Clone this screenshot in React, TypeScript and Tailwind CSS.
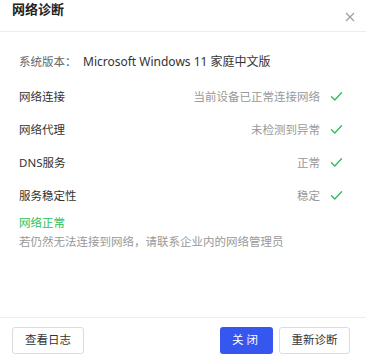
const checks = [
  { label: "网络连接", value: "当前设备已正常连接网络" },
  { label: "网络代理", value: "未检测到异常" },
  { label: "DNS服务", value: "正常" },
  { label: "服务稳定性", value: "稳定" },
];

function CheckMark() {
  return (
    <svg width="13" height="11" viewBox="0 0 13 11" fill="none" className="ml-[10px] shrink-0">
      <path d="M1.5 5.8 L4.8 9 L11.5 1.8" stroke="#2ec05c" strokeWidth="1.4" strokeLinecap="round" strokeLinejoin="round" />
    </svg>
  );
}

export default function App() {
  return (
    <div
      className="flex h-[362px] w-[366px] flex-col bg-white text-[#333]"
      style={{ fontFamily: '"Noto Sans", "Noto Sans CJK SC", sans-serif' }}
    >
      <div className="flex h-[32px] items-center justify-between border-b border-[#ececec] pl-3 pr-[11px]">
        <h1 className="-mt-[12px] text-[13px] font-bold text-[#222]">网络诊断</h1>
        <svg width="10" height="10" viewBox="0 0 10 10" className="mt-[3px]">
          <path d="M1 1 L9 9 M9 1 L1 9" stroke="#9a9aa2" strokeWidth="1.1" />
        </svg>
      </div>

      <div className="flex-1 pl-[19px] pr-[23px] pt-[20px] text-[11.5px]">
        <div className="flex h-[20px] items-center">
          <span className="w-[64px] text-[#666]">系统版本：</span>
          <span className="text-[12px] text-[#333]">Microsoft Windows 11 家庭中文版</span>
        </div>

        <div className="mt-[8px]">
          {checks.map((c) => (
            <div key={c.label} className="flex h-[33px] items-center">
              <span className="flex-1 text-[#333]">{c.label}</span>
              <span className="text-[#999]">{c.value}</span>
              <CheckMark />
            </div>
          ))}
        </div>

        <p className="mt-[2px] leading-[18px] text-[#2cbf57]">网络正常</p>
        <p className="leading-[20px] text-[#999]">若仍然无法连接到网络，请联系企业内的网络管理员</p>
      </div>

      <div className="flex h-[45px] items-center justify-between border-t border-[#eeeeee] pl-3 pr-4">
        <button className="h-[27px] w-[72px] rounded-[3px] border border-[#dcdcdc] text-[11.5px] text-[#333]">
          查看日志
        </button>
        <div className="flex gap-[6px]">
          <button className="h-[27px] w-[53px] rounded-[3px] bg-[#3556ef] text-[11.5px] tracking-[3px] text-white">
            关闭
          </button>
          <button className="h-[27px] w-[71px] rounded-[3px] border border-[#dcdcdc] text-[11.5px] text-[#333]">
            重新诊断
          </button>
        </div>
      </div>
    </div>
  );
}
